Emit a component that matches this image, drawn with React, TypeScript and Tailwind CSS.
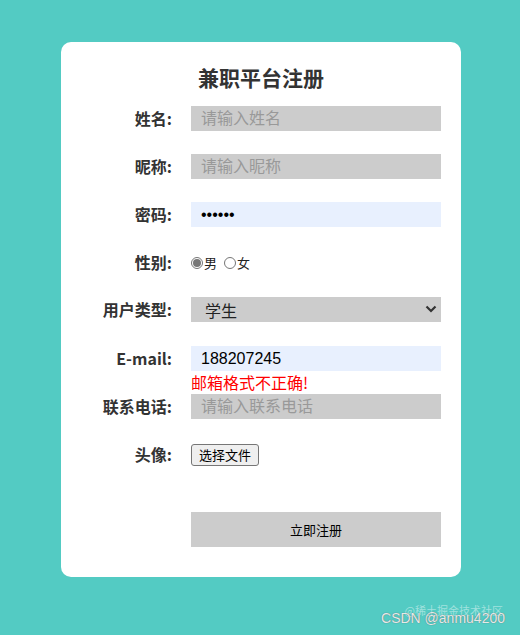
import { useState } from 'react';

const font = 'font-["Microsoft_YaHei","Noto_Sans_CJK_SC",sans-serif]';

function Row({ label, children, className = '' }: { label: string; children: React.ReactNode; className?: string }) {
  return (
    <div className={`flex items-center h-[25px] ${className}`}>
      <label className="w-[111px] shrink-0 text-right text-[16px] font-bold text-[#333] leading-[25px]">
        {label}
      </label>
      <div className="ml-[19px] w-[250px] h-full flex items-center">{children}</div>
    </div>
  );
}

const inputCls =
  'w-full h-[25px] pl-[10px] text-[16px] text-black outline-none border-0 font-["Liberation_Sans","Noto_Sans_CJK_SC",sans-serif] placeholder:text-[#999]';

function Radio({ checked }: { checked?: boolean }) {
  return (
    <span className="w-[12px] h-[12px] rounded-full border border-[#767676] bg-white flex items-center justify-center">
      {checked && <span className="w-[8px] h-[8px] rounded-full bg-[#777]" />}
    </span>
  );
}

export default function App() {
  const [gender, setGender] = useState('男');

  return (
    <div className={`min-h-[635px] w-[520px] bg-[#53cbc3] pt-[42px] pl-[61px] relative overflow-hidden ${font}`}>
      <div className="w-[400px] h-[535px] bg-white rounded-[10px] pt-[21px]">
        <h1 className="text-center text-[21px] font-bold text-[#333] leading-[28px]">兼职平台注册</h1>

        <div className="mt-[15px] flex flex-col">
          <Row label="姓名:">
            <input className={`${inputCls} bg-[#ccc]`} placeholder="请输入姓名" />
          </Row>
          <Row label="昵称:" className="mt-[23px]">
            <input className={`${inputCls} bg-[#ccc]`} placeholder="请输入昵称" />
          </Row>
          <Row label="密码:" className="mt-[23px]">
            <input type="password" className={`${inputCls} bg-[#e8f0fe]`} defaultValue="123456" />
          </Row>
          <Row label="性别:" className="mt-[23px]">
            <div className="flex items-center text-[13px] text-[#222] leading-none">
              <button className="flex items-center" onClick={() => setGender('男')}>
                <Radio checked={gender === '男'} />
                <span className="ml-[1px]">男</span>
              </button>
              <button className="flex items-center ml-[7px]" onClick={() => setGender('女')}>
                <Radio checked={gender === '女'} />
                <span className="ml-[1px]">女</span>
              </button>
            </div>
          </Row>
          <Row label="用户类型:" className="mt-[22px]">
            <div className="relative w-full h-[25px]">
              <select className="appearance-none w-full h-[25px] bg-[#ccc] pl-[14px] text-[16px] text-[#222] outline-none border-0">
                <option>学生</option>
                <option>上班族</option>
              </select>
              <svg className="absolute right-[4px] top-[8px] pointer-events-none" width="12" height="8" viewBox="0 0 12 8">
                <path d="M1.5 1.5 L6 6 L10.5 1.5" fill="none" stroke="#333" strokeWidth="2.2" />
              </svg>
            </div>
          </Row>
          <Row label="E-mail:" className="mt-[24px]">
            <input className={`${inputCls} bg-[#e8f0fe]`} defaultValue="188207245" />
          </Row>
          <div className="ml-[130px] h-[23px] text-[16px] leading-[23px] text-[#f00]">邮箱格式不正确!</div>
          <Row label="联系电话:">
            <input className={`${inputCls} bg-[#ccc]`} placeholder="请输入联系电话" />
          </Row>
          <Row label="头像:" className="mt-[23px]">
            <button className="h-[22px] px-[7px] text-[13px] leading-none text-black bg-[#efefef] border border-[#767676] rounded-[3px]">
              选择文件
            </button>
          </Row>
          <div className="ml-[130px] mt-[45px] w-[250px] h-[35px] bg-[#ccc] flex items-center justify-center text-[13px] text-black">
            立即注册
          </div>
        </div>
      </div>

      <div className="absolute right-[15px] bottom-[10px] text-right leading-none">
        <div className="text-[11px] text-white/45 mr-[2px]">@稀土掘金技术社区</div>
        <div className="text-[14px] text-white/85 -mt-[5px] font-['Liberation_Sans',sans-serif] [text-shadow:0_0_1px_#555]">
          CSDN @anmu4200
        </div>
      </div>
    </div>
  );
}
